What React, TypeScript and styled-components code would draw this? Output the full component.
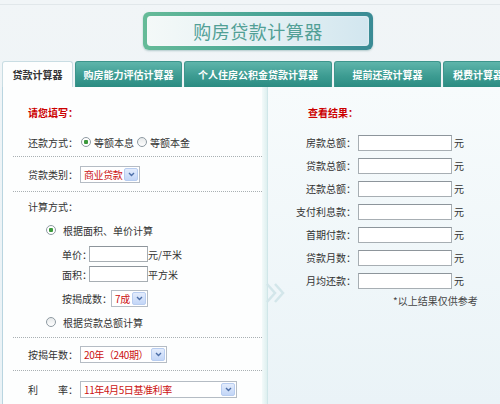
import React from "react";
import styled, { createGlobalStyle } from "styled-components";

const Global = createGlobalStyle`
  html, body { margin: 0; padding: 0; }
  body {
    width: 500px; height: 404px; overflow: hidden;
    font-family: "Noto Sans CJK SC", "Noto Sans", sans-serif;
    font-size: 10px; color: #333;
    background: #eef3f6;
  }
`;

const Page = styled.div`
  width: 500px;
  height: 404px;
  overflow: hidden;
  background: linear-gradient(#f1f5f7, #eaf2f6);
`;

const Header = styled.div`
  margin-top: 4px;
  border-top: 1px solid #e1e7ea;
  padding: 7px 0 11px 143px;
`;

const TitleFrame = styled.div`
  width: 222px;
  height: 30px;
  padding: 4px;
  border-radius: 6px;
  background: linear-gradient(to right, #66bb98, #4aa596 50%, #3a8b95);
  box-shadow: 0 1px 2px rgba(60, 120, 120, 0.35);
`;

const TitleInner = styled.div`
  height: 100%;
  border-radius: 4px;
  background: linear-gradient(to right, #f4f9f8, #e2eff3 60%, #d2e6ef);
  display: flex;
  align-items: center;
  justify-content: center;
  font-size: 18px;
  letter-spacing: 0.5px;
  color: #52a096;
  box-shadow: inset 0 0 2px rgba(255,255,255,0.9);
`;

const Tabs = styled.div`
  display: flex;
  gap: 2px;
  padding-left: 2px;
  height: 26px;
`;

const Tab = styled.div<{ $w: number; $active?: boolean }>`
  flex: 0 0 ${(p) => p.$w}px;
  height: 26px;
  box-sizing: border-box;
  border-radius: 3px 3px 0 0;
  display: flex;
  align-items: center;
  justify-content: center;
  font-weight: bold;
  font-size: 10px;
  white-space: nowrap;
  color: ${(p) => (p.$active ? "#333" : "#fff")};
  background: ${(p) =>
    p.$active ? "#fdfefe" : "linear-gradient(#5fb5ab, #3d9c92 55%, #2c8c82)"};
  border: 1px solid ${(p) => (p.$active ? "#c9dde3" : "#3d958c")};
  border-bottom: none;
`;

const Body = styled.div`
  display: flex;
  height: 317px;
  padding-left: 2px;
`;

const LeftPanel = styled.div`
  width: 260px;
  box-sizing: border-box;
  background: #fdfefe;
  border-left: 1px solid #b9d5e0;
`;

const Divider = styled.div`
  width: 6px;
  background: linear-gradient(to right, #f3fafa, #dff0f0 80%, #c5dfe3);
`;

const RightPanel = styled.div`
  flex: 1;
  position: relative;
  background: linear-gradient(#f7fbfc, #eaf3f7);
`;

const Heading = styled.div<{ $pl: number }>`
  height: 16px;
  margin-top: 17px;
  padding-left: ${(p) => p.$pl}px;
  display: flex;
  align-items: center;
  color: #cc0000;
  font-weight: bold;
  font-size: 10px;
`;

const Row = styled.div<{ $mt?: number; $pl?: number }>`
  height: 20px;
  margin-top: ${(p) => p.$mt ?? 0}px;
  padding-left: ${(p) => p.$pl ?? 25}px;
  display: flex;
  align-items: center;
  white-space: nowrap;
`;

const Dotted = styled.div<{ $mt: number }>`
  margin: ${(p) => p.$mt}px 0 0 10px;
  border-top: 1px dotted #a9b0b3;
`;

const Label = styled.span<{ $gap?: number }>`
  margin-right: ${(p) => p.$gap ?? 2}px;
`;

const RadioDot = styled.span<{ $checked?: boolean; $gap?: number }>`
  width: 8px;
  height: 8px;
  border-radius: 50%;
  border: 1px solid #8e9aa2;
  background: ${(p) =>
    p.$checked
      ? "radial-gradient(circle, #3c9a3c 0 2px, #fff 2.5px)"
      : "linear-gradient(#e6e9ea, #ffffff)"};
  margin-right: ${(p) => p.$gap ?? 3}px;
  flex: none;
`;

const Option = styled.span`
  margin-right: 3px;
`;

const TextBox = styled.div<{ $w: number }>`
  width: ${(p) => p.$w}px;
  height: 16px;
  box-sizing: border-box;
  border: 1px solid #a7aeb3;
  border-top-color: #8d959b;
  background: #fff;
  flex: none;
`;

const SelectBox = styled.div<{ $w: number }>`
  width: ${(p) => p.$w}px;
  height: 17px;
  box-sizing: border-box;
  border: 1px solid #b5bcc4;
  background: #fff;
  display: flex;
  align-items: center;
  padding: 0 1px 0 3px;
  color: #cc1111;
  font-size: 10px;
  letter-spacing: -0.4px;
  flex: none;
`;

const SelectText = styled.span`
  flex: 1;
  white-space: nowrap;
`;

const SelectArrow = styled.span`
  width: 14px;
  height: 13px;
  border-radius: 2px;
  border: 1px solid #b8cdf0;
  box-sizing: border-box;
  background: linear-gradient(#e3ecfc, #c3d6f7);
  display: flex;
  align-items: center;
  justify-content: center;
  flex: none;
`;

const ResultGrid = styled.div`
  display: grid;
  grid-template-columns: 88px 94px auto;
  grid-auto-rows: 23px;
  column-gap: 2px;
  margin-top: 11px;
  align-items: center;
`;

const ResultLabel = styled.span`
  text-align: right;
  white-space: nowrap;
`;

const Note = styled.div`
  margin-left: 125px;
  height: 16px;
  display: flex;
  align-items: center;
  color: #444;
`;

const Chevrons = styled.svg`
  position: absolute;
  left: -3px;
  top: 195px;
`;

const Arrow = () => (
  <SelectArrow>
    <svg width="7" height="5" viewBox="0 0 7 5">
      <path d="M1 1 L3.5 3.5 L6 1" fill="none" stroke="#4d6fa8" strokeWidth="1.4" />
    </svg>
  </SelectArrow>
);

const Select = ({ w, text }: { w: number; text: string }) => (
  <SelectBox $w={w}>
    <SelectText>{text}</SelectText>
    <Arrow />
  </SelectBox>
);

const tabs = [
  { t: "贷款计算器", w: 71, a: true },
  { t: "购房能力评估计算器", w: 107 },
  { t: "个人住房公积金贷款计算器", w: 148 },
  { t: "提前还款计算器", w: 107 },
  { t: "税费计算器", w: 70 },
];

const results = [
  "房款总额：",
  "贷款总额：",
  "还款总额：",
  "支付利息款：",
  "首期付款：",
  "贷款月数：",
  "月均还款：",
];

export default function App() {
  return (
    <Page>
      <Global />
      <Header>
        <TitleFrame>
          <TitleInner>购房贷款计算器</TitleInner>
        </TitleFrame>
      </Header>
      <Tabs>
        {tabs.map((t) => (
          <Tab key={t.t} $w={t.w} $active={t.a}>
            {t.t}
          </Tab>
        ))}
      </Tabs>
      <Body>
        <LeftPanel>
          <Heading $pl={25}>请您填写：</Heading>
          <Row $mt={12}>
            <Label $gap={3}>还款方式：</Label>
            <RadioDot $checked />
            <Option>等额本息</Option>
            <RadioDot />
            <Option>等额本金</Option>
          </Row>
          <Dotted $mt={4} />
          <Row $mt={7}>
            <Label>贷款类别：</Label>
            <Select w={60} text="商业贷款" />
          </Row>
          <Dotted $mt={7} />
          <Row $mt={4}>计算方式：</Row>
          <Row $mt={4} $pl={43}>
            <RadioDot $checked $gap={7} />
            根据面积、单价计算
          </Row>
          <Row $mt={4} $pl={59}>
            <Label $gap={-3}>单价：</Label>
            <TextBox $w={59} />
            元/平米
          </Row>
          <Row $pl={59}>
            <Label $gap={-3}>面积：</Label>
            <TextBox $w={59} />
            平方米
          </Row>
          <Row $mt={4} $pl={59}>
            <Label $gap={-1}>按揭成数：</Label>
            <Select w={37} text="7成" />
          </Row>
          <Row $mt={4} $pl={43}>
            <RadioDot $gap={7} />
            根据贷款总额计算
          </Row>
          <Dotted $mt={5} />
          <Row $mt={6}>
            <Label>按揭年数：</Label>
            <Select w={87} text="20年（240期）" />
          </Row>
          <Dotted $mt={6} />
          <Row $mt={8}>
            <Label>利　　率：</Label>
            <Select w={157} text="11年4月5日基准利率" />
          </Row>
        </LeftPanel>
        <Divider />
        <RightPanel>
          <Heading $pl={40}>查看结果：</Heading>
          <ResultGrid>
            {results.map((r) => (
              <React.Fragment key={r}>
                <ResultLabel>{r}</ResultLabel>
                <TextBox $w={94} />
                <span>元</span>
              </React.Fragment>
            ))}
          </ResultGrid>
          <Note>*以上结果仅供参考</Note>
          <Chevrons width="24" height="22" viewBox="0 0 24 22">
            <path
              d="M2 2 L10 11 L2 20 M10 2 L18 11 L10 20"
              fill="none"
              stroke="#d3e6ea"
              strokeWidth="2.5"
            />
          </Chevrons>
        </RightPanel>
      </Body>
    </Page>
  );
}
